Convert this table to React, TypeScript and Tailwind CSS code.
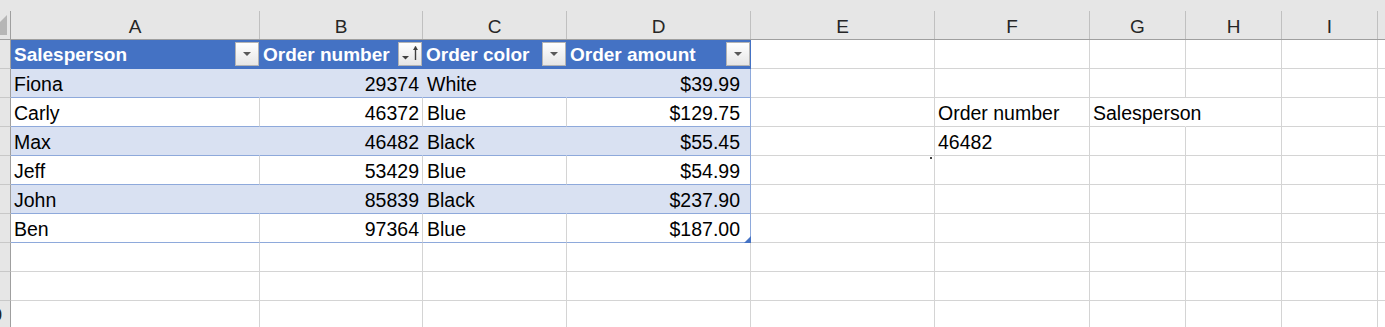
import React from "react";

const FONT = "font-['Liberation_Sans',Arial,sans-serif]";

// Column widths include the 1px right gridline of each column.
const WIDTHS = [
  "w-[249px]",
  "w-[163px]",
  "w-[144px]",
  "w-[184px]",
  "w-[184px]",
  "w-[155px]",
  "w-[96px]",
  "w-[96px]",
  "w-[96px]",
];
const LETTERS = ["A", "B", "C", "D", "E", "F", "G", "H", "I"];

const ORDERS = [
  ["Fiona", "29374", "White", "$39.99"],
  ["Carly", "46372", "Blue", "$129.75"],
  ["Max", "46482", "Black", "$55.45"],
  ["Jeff", "53429", "Blue", "$54.99"],
  ["John", "85839", "Black", "$237.90"],
  ["Ben", "97364", "Blue", "$187.00"],
];

const TXT = "whitespace-nowrap pb-[3px] text-[19.5px] leading-[20px]";

function RowHead({ label }: { label?: string }) {
  return (
    <div className="flex h-full w-[11px] shrink-0 items-center justify-end overflow-hidden border-r border-b border-r-[#9f9f9f] border-b-[#c8c8c8] bg-[#e6e6e6]">
      {label && (
        <span className="mr-[8px] whitespace-nowrap text-[19px] leading-[20px] text-[#222]">
          {label}
        </span>
      )}
    </div>
  );
}

function FilterButton() {
  return (
    <span className="mb-[2px] ml-auto flex h-[24px] w-[24px] shrink-0 items-start justify-center border border-[#b4b4b4] bg-linear-to-b from-white to-[#e6e6e6]">
      <svg width="22" height="22" viewBox="0 0 22 22" className="block">
        <polygon points="7,9 15,9 11,13" fill="#595959" />
      </svg>
    </span>
  );
}

function SortButton() {
  return (
    <span className="mb-[2px] ml-auto flex h-[24px] w-[24px] shrink-0 items-start justify-center border border-[#b4b4b4] bg-linear-to-b from-white to-[#e6e6e6]">
      <svg width="22" height="22" viewBox="0 0 22 22" className="block">
        <polygon points="3,13 10,13 6.5,16.5" fill="#404040" />
        <line x1="16.5" y1="3.5" x2="16.5" y2="17" stroke="#404040" strokeWidth="1.4" />
        <polygon points="14,7 16.5,3 19,7" fill="#404040" />
      </svg>
    </span>
  );
}

function EmptyCells({ from, noRight }: { from: number; noRight?: number }) {
  return (
    <>
      {WIDTHS.slice(from).map((w, i) => {
        const idx = from + i;
        return (
          <div
            key={idx}
            className={`${w} h-full shrink-0 border-r border-b border-b-[#d4d4d4] ${
              idx === noRight ? "border-r-transparent" : "border-r-[#d4d4d4]"
            }`}
          />
        );
      })}
      <div className="h-full flex-1 border-b border-[#d4d4d4]" />
    </>
  );
}

export default function App() {
  return (
    <div className={`${FONT} h-[327px] w-[1385px] overflow-hidden bg-white text-black`}>
      {/* column letters */}
      <div className="relative flex h-[40px] items-end border-b border-[#9f9f9f] bg-[#e6e6e6]">
        <svg className="absolute left-0 top-[15px]" width="8" height="21" viewBox="0 0 8 21">
          <polygon points="7,0 7,20 0,20 0,7" fill="#b6b6b6" />
        </svg>
        <div className="h-[28px] w-[11px] shrink-0 border-r border-[#9f9f9f]" />
        {LETTERS.map((l, i) => (
          <div
            key={l}
            className={`${WIDTHS[i]} flex h-[28px] shrink-0 items-end justify-center border-r border-[#c0c0c0] pb-[2px] text-[19px] leading-[20px] text-[#262626]`}
          >
            {l}
          </div>
        ))}
        <div className="h-[28px] flex-1" />
      </div>

      {/* table header row */}
      <div className="flex h-[29px]">
        <RowHead />
        <div className="flex h-full w-[249px] shrink-0 items-end border-r border-b border-[#4472c4] bg-[#4472c4] pl-[3px] text-white">
          <span className="whitespace-nowrap pb-[3px] text-[19px] font-bold leading-[20px]">Salesperson</span>
          <FilterButton />
        </div>
        <div className="flex h-full w-[163px] shrink-0 items-end border-r border-b border-[#4472c4] bg-[#4472c4] pl-[3px] text-white">
          <span className="whitespace-nowrap pb-[3px] text-[19px] font-bold leading-[20px]">Order number</span>
          <SortButton />
        </div>
        <div className="flex h-full w-[144px] shrink-0 items-end border-r border-b border-[#4472c4] bg-[#4472c4] pl-[3px] text-white">
          <span className="whitespace-nowrap pb-[3px] text-[19px] font-bold leading-[20px]">Order color</span>
          <FilterButton />
        </div>
        <div className="flex h-full w-[184px] shrink-0 items-end border-r border-b border-[#4472c4] bg-[#4472c4] pl-[3px] text-white">
          <span className="whitespace-nowrap pb-[3px] text-[19px] font-bold leading-[20px]">Order amount</span>
          <FilterButton />
        </div>
        <EmptyCells from={4} />
      </div>

      {/* table body */}
      {ORDERS.map((r, i) => {
        const banded = i % 2 === 0;
        const inner = banded
          ? "bg-[#d9e1f2] border-r-[#d9e1f2]"
          : "border-r-[#d4d4d4]";
        const last = i === ORDERS.length - 1;
        return (
          <div key={r[0]} className="flex h-[29px]">
            <RowHead />
            <div className={`flex h-full w-[249px] shrink-0 items-end border-r border-b border-b-[#8ea9db] pl-[3px] ${inner}`}>
              <span className={TXT}>{r[0]}</span>
            </div>
            <div className={`flex h-full w-[163px] shrink-0 items-end justify-end border-r border-b border-b-[#8ea9db] pr-[3px] ${inner}`}>
              <span className={TXT}>{r[1]}</span>
            </div>
            <div className={`flex h-full w-[144px] shrink-0 items-end border-r border-b border-b-[#8ea9db] pl-[4px] ${inner}`}>
              <span className={TXT}>{r[2]}</span>
            </div>
            <div
              className={`relative flex h-full w-[184px] shrink-0 items-end justify-end border-r border-b border-[#8ea9db] pr-[10px] ${
                banded ? "bg-[#d9e1f2]" : ""
              }`}
            >
              <span className={TXT}>{r[3]}</span>
              {last && (
                <svg className="absolute -bottom-[1px] -right-[1px]" width="7" height="7" viewBox="0 0 7 7">
                  <polygon points="7,0 7,7 0,7" fill="#4472c4" />
                </svg>
              )}
            </div>
            {/* E column */}
            <div className="relative h-full w-[184px] shrink-0 border-r border-b border-[#d4d4d4]">
              {i === 3 && <span className="absolute right-[2px] top-[1px] h-[2px] w-[2px] bg-[#404040]" />}
            </div>
            {/* F column */}
            <div className="flex h-full w-[155px] shrink-0 items-end border-r border-b border-[#d4d4d4] pl-[3px]">
              {i === 1 && <span className={TXT}>Order number</span>}
              {i === 2 && <span className={TXT}>46482</span>}
            </div>
            {/* G column, its label spills over into H */}
            <div
              className={`flex h-full w-[96px] shrink-0 items-end border-r border-b border-b-[#d4d4d4] pl-[3px] ${
                i === 1 ? "border-r-transparent" : "border-r-[#d4d4d4]"
              }`}
            >
              {i === 1 && <span className={TXT}>Salesperson</span>}
            </div>
            <EmptyCells from={7} />
          </div>
        );
      })}

      {/* empty rows below the table */}
      {[8, 9, 10].map((n) => (
        <div key={n} className="flex h-[29px]">
          <RowHead label={n === 10 ? "10" : undefined} />
          <EmptyCells from={0} />
        </div>
      ))}
    </div>
  );
}
